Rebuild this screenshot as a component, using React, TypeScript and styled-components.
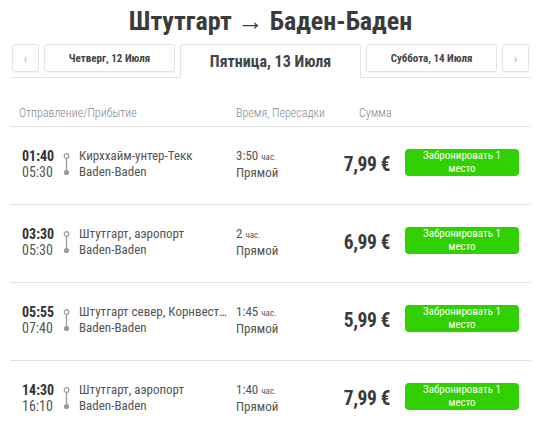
import React from "react";
import styled, { createGlobalStyle } from "styled-components";

const Global = createGlobalStyle`
  html, body { margin: 0; padding: 0; background: #fff; }
  body { font-family: Roboto, "Liberation Sans", sans-serif; color: #444; }
  * { box-sizing: border-box; }
`;

const Page = styled.div`
  width: 538px;
  padding: 6px 7px 0 10px;
`;

const Title = styled.h1`
  margin: 0;
  text-align: center;
  font-family: Roboto, sans-serif;
  font-stretch: 75%;
  font-weight: 700;
  font-size: 26px;
  line-height: 30px;
  color: #3b3b3b;
`;

const DateNav = styled.div`
  display: flex;
  align-items: flex-start;
  gap: 5px;
  margin-top: 8px;
  padding: 0 2px;
  border-bottom: 1px solid #e3e3e3;
  height: 34px;
`;

const NavBox = styled.div<{ $w: number }>`
  width: ${(p) => p.$w}px;
  height: 28px;
  border: 1px solid #e4e4e4;
  border-radius: 3px;
  display: flex;
  align-items: center;
  justify-content: center;
  font-family: Roboto, sans-serif;
  font-stretch: 75%;
  font-weight: 700;
  font-size: 11px;
  color: #444;
  box-shadow: 0 1px 1px rgba(0, 0, 0, 0.04);
`;

const Arrow = styled(NavBox)`
  font-weight: 400;
  font-size: 13px;
  color: #aaa;
`;

const ActiveTab = styled.div`
  width: 181px;
  height: 34px;
  border: 1px solid #e4e4e4;
  border-bottom: none;
  border-radius: 3px 3px 0 0;
  display: flex;
  align-items: center;
  justify-content: center;
  font-family: Roboto, sans-serif;
  font-stretch: 75%;
  font-weight: 700;
  font-size: 16px;
  color: #444;
  background: #fff;
  margin-bottom: -1px;
`;

const cols = "40px 17px 157px 1fr 84px 114px";

const HeaderRow = styled.div`
  display: grid;
  grid-template-columns: ${cols};
  padding: 27px 12px 5px 9px;
  border-bottom: 1px solid #e3e3e3;
  font-size: 12px;
  line-height: 16px;
  font-stretch: 87%;
  font-weight: 300;
  color: #888;
`;

const HeadCell = styled.div<{ $span?: number; $pad?: number }>`
  grid-column: span ${(p) => p.$span ?? 1};
  padding-left: ${(p) => p.$pad ?? 0}px;
  white-space: nowrap;
`;

const Row = styled.div`
  display: grid;
  grid-template-columns: ${cols};
  align-items: center;
  height: 78px;
  padding: 0 12px;
  border-bottom: 1px solid #e3e3e3;
  font-size: 13px;
  line-height: 16px;
  color: #555;
  font-stretch: 87%;
`;

const Times = styled.div`
  display: flex;
  flex-direction: column;
  margin-top: -3px;
`;

const Dep = styled.span`
  font-weight: 700;
  color: #333;
  font-stretch: 75%;
  font-size: 14px;
`;

const Arr = styled.span`
  font-stretch: 75%;
  font-size: 14px;
`;

const Stations = styled.div`
  display: flex;
  flex-direction: column;
  min-width: 0;
  margin-top: -3px;
`;

const Station = styled.span`
  white-space: nowrap;
  overflow: hidden;
  text-overflow: ellipsis;
  padding-right: 4px;
`;

const Duration = styled.div`
  display: flex;
  flex-direction: column;
  margin-top: -3px;
`;

const Unit = styled.span`
  font-size: 9px;
`;

const Price = styled.div`
  font-family: Roboto, sans-serif;
  font-stretch: 75%;
  font-weight: 700;
  font-size: 19.5px;
  letter-spacing: -0.4px;
  color: #3a3a3a;
  text-align: right;
  padding-right: 15px;
  margin-top: -2px;
`;

const BookButton = styled.button`
  width: 114px;
  height: 27px;
  margin-top: -7px;
  border: none;
  border-radius: 4px;
  background: #31d000;
  color: #fff;
  font-family: Roboto, sans-serif;
  font-stretch: 80%;
  font-size: 11px;
  line-height: 13px;
  padding: 0 4px;
  text-align: center;
`;

const RouteIcon = () => (
  <svg width="9" height="22" viewBox="0 0 9 22" style={{ marginTop: -3 }}>
    <circle cx="4.5" cy="3" r="2.3" fill="none" stroke="#9a9a9a" strokeWidth="1.2" />
    <line x1="4.5" y1="5.3" x2="4.5" y2="18" stroke="#9a9a9a" strokeWidth="1.3" />
    <circle cx="4.5" cy="19.5" r="2.6" fill="#9a9a9a" />
  </svg>
);

type Trip = { dep: string; arr: string; from: string; to: string; h: string; unit: string; price: string };

const trips: Trip[] = [
  { dep: "01:40", arr: "05:30", from: "Кирххайм-унтер-Текк", to: "Baden-Baden", h: "3:50", unit: "час.", price: "7,99 €" },
  { dep: "03:30", arr: "05:30", from: "Штутгарт, аэропорт", to: "Baden-Baden", h: "2", unit: "час.", price: "6,99 €" },
  { dep: "05:55", arr: "07:40", from: "Штутгарт север, Корнвестхайм", to: "Baden-Baden", h: "1:45", unit: "час.", price: "5,99 €" },
  { dep: "14:30", arr: "16:10", from: "Штутгарт, аэропорт", to: "Baden-Baden", h: "1:40", unit: "час.", price: "7,99 €" },
];

export default function App() {
  return (
    <>
      <Global />
      <Page>
        <Title>Штутгарт → Баден-Баден</Title>
        <DateNav>
          <Arrow $w={27}>‹</Arrow>
          <NavBox $w={131}>Четверг, 12 Июля</NavBox>
          <ActiveTab>Пятница, 13 Июля</ActiveTab>
          <NavBox $w={131}>Суббота, 14 Июля</NavBox>
          <Arrow $w={27}>›</Arrow>
        </DateNav>
        <HeaderRow>
          <HeadCell $span={3}>Отправление/Прибытие</HeadCell>
          <HeadCell $pad={3}>Время, Пересадки</HeadCell>
          <HeadCell $pad={34}>Сумма</HeadCell>
          <HeadCell />
        </HeaderRow>
        {trips.map((t, i) => (
          <Row key={i}>
            <Times>
              <Dep>{t.dep}</Dep>
              <Arr>{t.arr}</Arr>
            </Times>
            <RouteIcon />
            <Stations>
              <Station>{t.from}</Station>
              <Station>{t.to}</Station>
            </Stations>
            <Duration>
              <span>
                {t.h} <Unit>{t.unit}</Unit>
              </span>
              <span>Прямой</span>
            </Duration>
            <Price>{t.price}</Price>
            <BookButton>Забронировать 1 место</BookButton>
          </Row>
        ))}
      </Page>
    </>
  );
}
